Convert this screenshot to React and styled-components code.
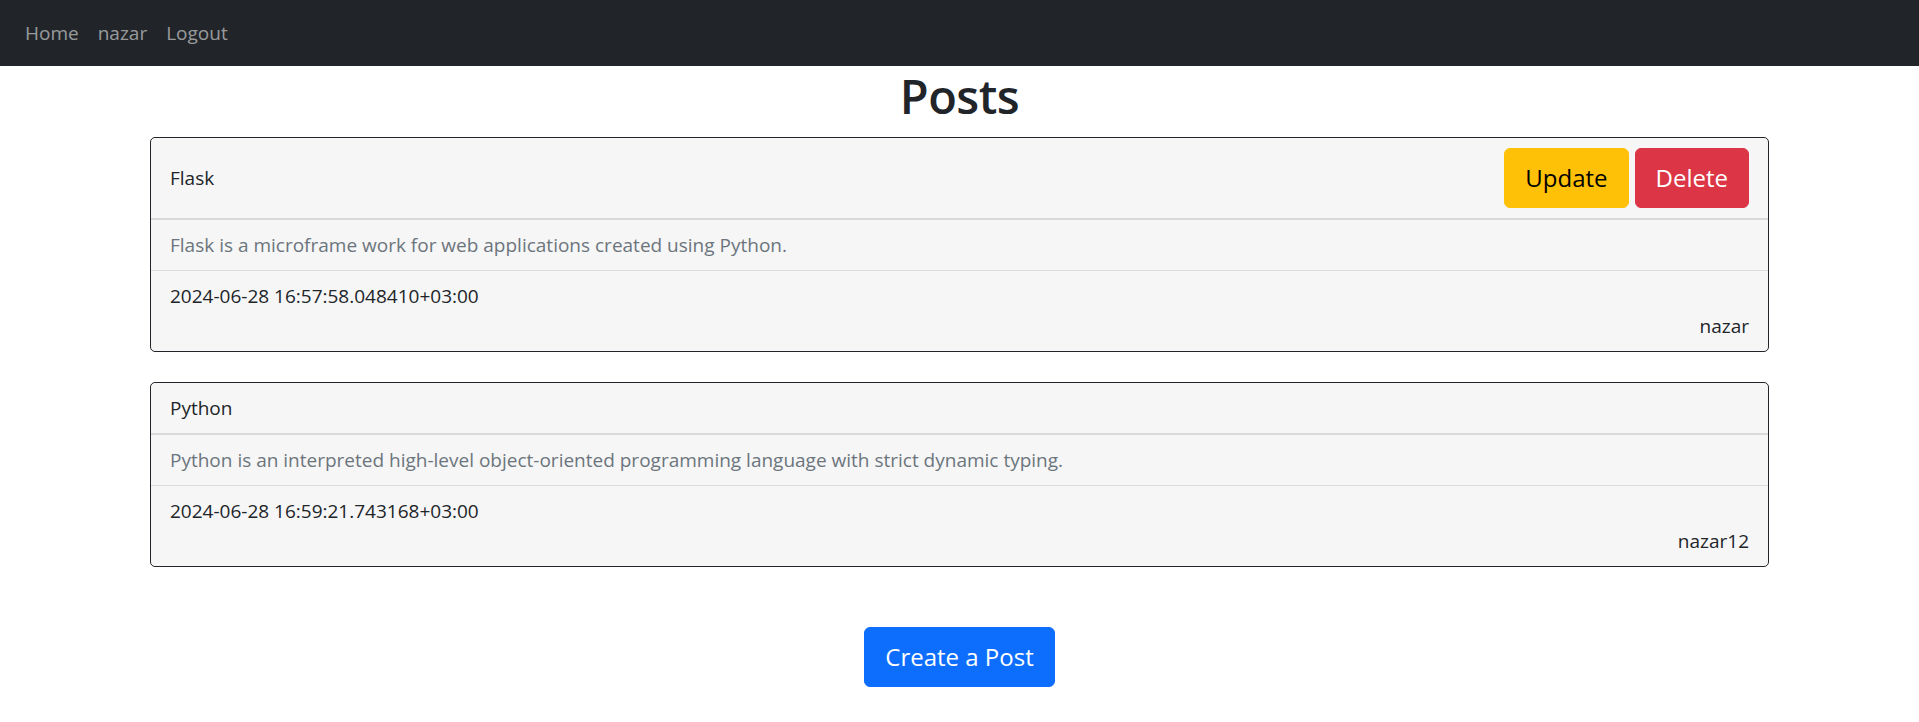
import React from "react";
import styled, { createGlobalStyle } from "styled-components";

const GlobalStyle = createGlobalStyle`
  body {
    margin: 0;
    font-family: "Open Sans", "Noto Sans", sans-serif;
    font-size: 19px;
    line-height: 30px;
    color: #212529;
    background: #fff;
  }
`;

const posts = [
  {
    id: 1,
    title: "Flask",
    body: "Flask is a microframe work for web applications created using Python.",
    date: "2024-06-28 16:57:58.048410+03:00",
    author: "nazar",
    own: true,
  },
  {
    id: 2,
    title: "Python",
    body: "Python is an interpreted high-level object-oriented programming language with strict dynamic typing.",
    date: "2024-06-28 16:59:21.743168+03:00",
    author: "nazar12",
    own: false,
  },
];

function App() {
  return (
    <>
      <GlobalStyle />
      <Navbar>
        <NavLink href="#">Home</NavLink>
        <NavLink href="#">nazar</NavLink>
        <NavLink href="#">Logout</NavLink>
      </Navbar>
      <Main>
        <Title>Posts</Title>
        {posts.map((post) => (
          <Card key={post.id}>
            <CardHeader>
              <span>{post.title}</span>
              {post.own && (
                <Actions>
                  <Button variant="warning">Update</Button>
                  <Button variant="danger">Delete</Button>
                </Actions>
              )}
            </CardHeader>
            <Item muted>{post.body}</Item>
            <Item last>
              <div>{post.date}</div>
              <Author>{post.author}</Author>
            </Item>
          </Card>
        ))}
        <CreateRow>
          <Button variant="primary">Create a Post</Button>
        </CreateRow>
      </Main>
    </>
  );
}

export default App;

const Navbar = styled.nav`
  display: flex;
  align-items: center;
  gap: 19px;
  height: 66px;
  padding: 0 25px;
  background: #212529;
`;

const NavLink = styled.a`
  color: rgba(255, 255, 255, 0.55);
  text-decoration: none;
  font-size: 19px;
`;

const Main = styled.main`
  padding: 0 150px 40px 150px;
`;

const Title = styled.h1`
  margin: 0 0 10px 0;
  text-align: center;
  font-size: 47px;
  line-height: 61px;
  font-weight: 600;
  letter-spacing: -0.5px;
`;

const Card = styled.div`
  background: #f6f6f6;
  border: 1px solid #212529;
  border-radius: 5px;
  margin-bottom: 30px;
  overflow: hidden;
`;

const CardHeader = styled.div`
  display: flex;
  align-items: center;
  justify-content: space-between;
  min-height: 30px;
  padding: 10px 19px;
  border-bottom: 2px solid #d9d9d9;
`;

const Actions = styled.div`
  display: flex;
  gap: 6px;
`;

const Item = styled.div`
  padding: 10px 19px;
  color: ${(p) => (p.muted ? "#6c757d" : "#212529")};
  border-bottom: ${(p) => (p.last ? "none" : "1px solid #dcdcdc")};
`;

const Author = styled.div`
  text-align: right;
`;

const colors = {
  primary: { bg: "#0d6efd", fg: "#fff" },
  warning: { bg: "#ffc107", fg: "#000" },
  danger: { bg: "#dc3545", fg: "#fff" },
};

const Button = styled.button`
  font-family: inherit;
  font-size: 24px;
  line-height: 38px;
  padding: 10px 20px;
  border: 1px solid ${(p) => colors[p.variant].bg};
  border-radius: 6px;
  background: ${(p) => colors[p.variant].bg};
  color: ${(p) => colors[p.variant].fg};
  cursor: pointer;
`;

const CreateRow = styled.div`
  display: flex;
  justify-content: center;
  padding-top: 30px;
`;
